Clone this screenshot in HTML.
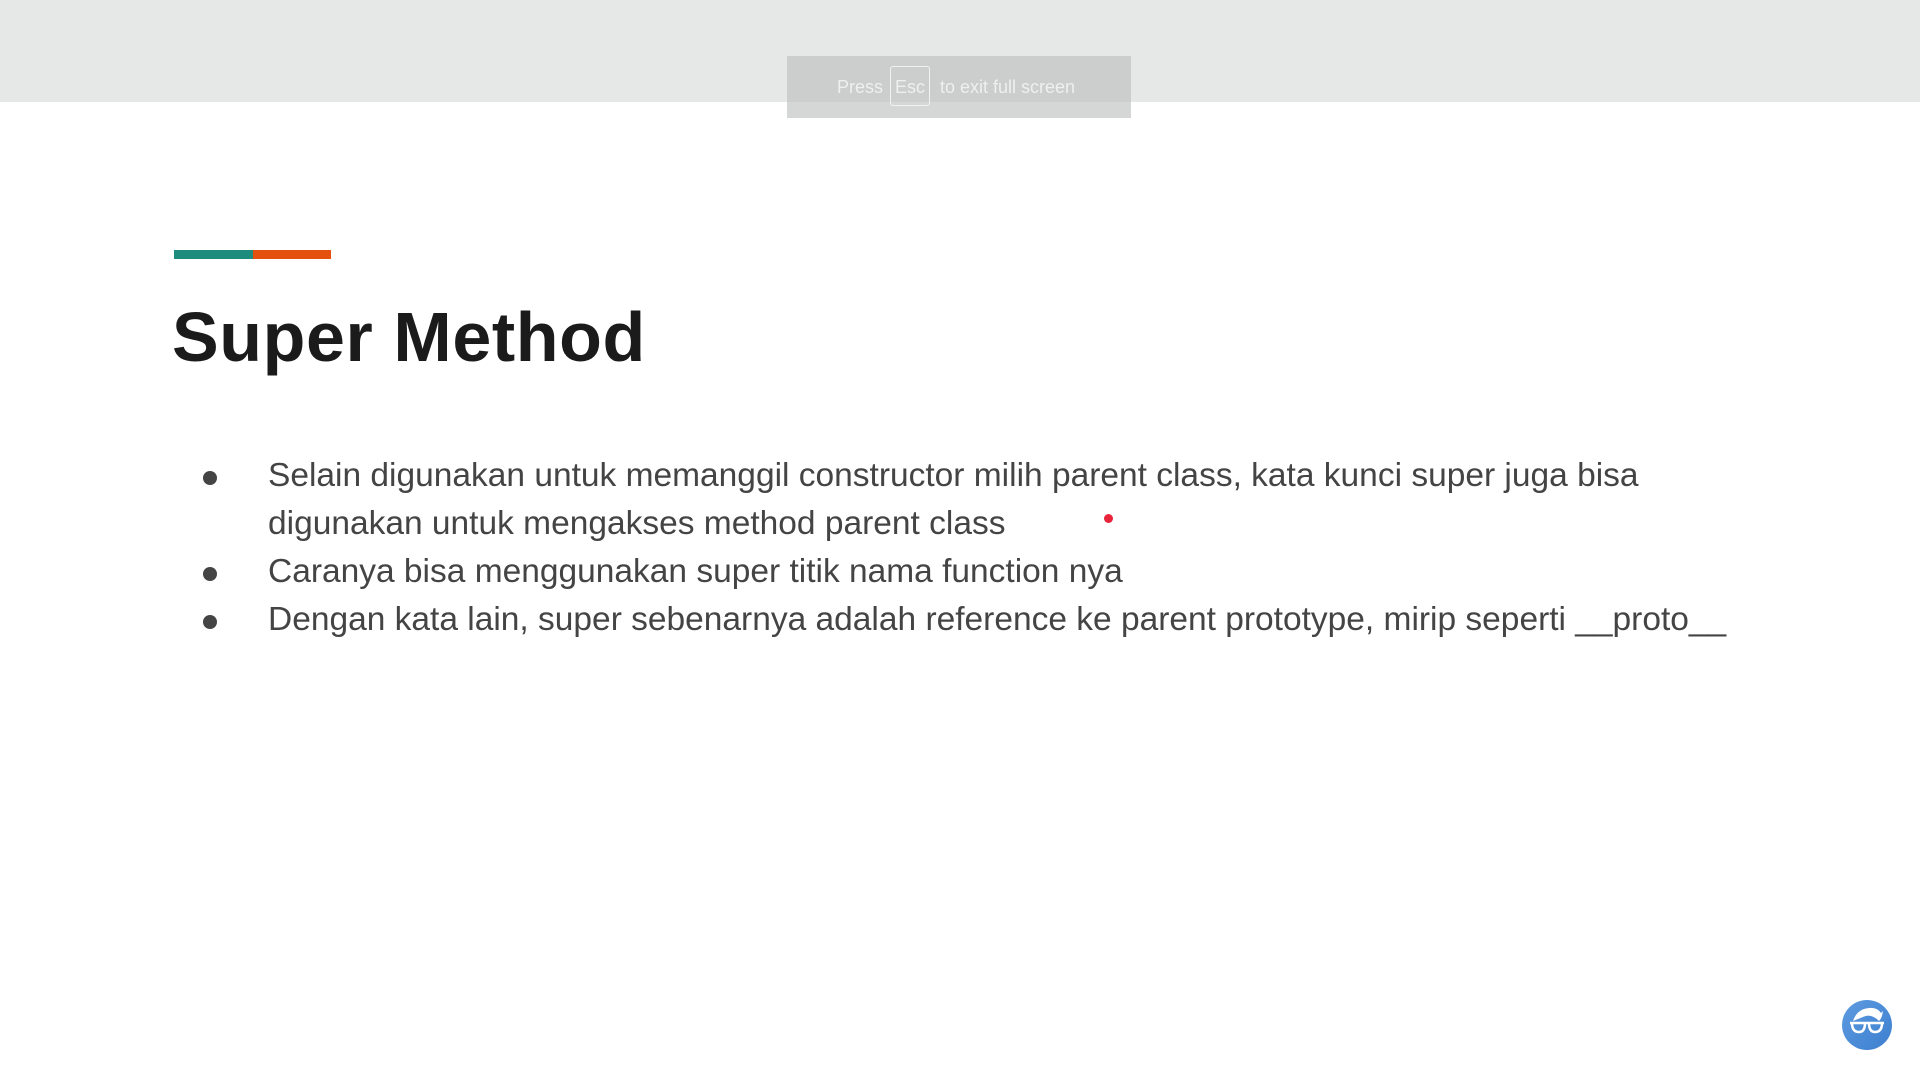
<!DOCTYPE html>
<html><head><meta charset="utf-8"><style>
html,body{margin:0;padding:0;width:1920px;height:1080px;overflow:hidden;background:#fff;font-family:"Liberation Sans",sans-serif;}
.top{position:absolute;left:0;top:0;width:1920px;height:102px;background:#e5e8e7;}
.toast{position:absolute;left:787px;top:56px;width:344px;height:62px;background:rgba(185,189,189,0.6);color:#eef0f0;font-size:18px;line-height:62px;}
.toast span{position:absolute;top:0;}
.esc{position:absolute;left:103px;top:10px;width:40px;height:40px;border:1.5px solid #f0f2f2;border-radius:3px;box-sizing:border-box;text-align:center;line-height:40px;}
.bar1{position:absolute;left:174px;top:250px;width:79px;height:9px;background:#1e8c7c;}
.bar2{position:absolute;left:253px;top:250px;width:78px;height:9px;background:#e4500e;}
h1{position:absolute;left:172px;top:297px;margin:0;font-size:70px;font-weight:bold;color:#1b1b1b;line-height:80px;letter-spacing:0.6px;}
.l{position:absolute;left:268px;font-size:33.5px;color:#444;white-space:nowrap;line-height:48px;letter-spacing:0;}
.d{position:absolute;left:203px;width:14px;height:14px;border-radius:50%;background:#444;}
.red{position:absolute;left:1104px;top:514px;width:9px;height:9px;border-radius:50%;background:#e8243a;}
</style></head><body>
<div class="top"></div>
<div class="toast"><span style="left:50px">Press</span><div class="esc">Esc</div><span style="left:153px">to exit full screen</span></div>
<div class="bar1"></div><div class="bar2"></div>
<h1>Super Method</h1>
<div class="d" style="top:471px"></div>
<div class="l" style="top:452px">Selain digunakan untuk memanggil constructor milih parent class, kata kunci super juga bisa</div>
<div class="l" style="top:500px">digunakan untuk mengakses method parent class</div>
<div class="d" style="top:567px"></div>
<div class="l" style="top:548px">Caranya bisa menggunakan super titik nama function nya</div>
<div class="d" style="top:615px"></div>
<div class="l" style="top:596px">Dengan kata lain, super sebenarnya adalah reference ke parent prototype, mirip seperti __proto__</div>
<div class="red"></div>
<svg style="position:absolute;left:1841px;top:999px" width="52" height="52" viewBox="0 0 52 52">
<defs><linearGradient id="g" x1="0" y1="0" x2="1" y2="1"><stop offset="0" stop-color="#5d9be0"/><stop offset="1" stop-color="#3d7fcf"/></linearGradient></defs>
<circle cx="26" cy="26" r="25" fill="url(#g)"/>
<path d="M12 22 Q16 10 28 9 Q36 8 40 14 L42 12 L41 17 Q40 20 38 22 Q30 14 22 18 Q17 20 12 22Z" fill="#fff"/>
<path d="M9 24 H43 M11 24 Q11 33 18 33 Q24 33 24 24 M28 24 Q28 33 34 33 Q41 33 41 24" stroke="#fff" stroke-width="2.5" fill="none"/>
</svg>
</body></html>
